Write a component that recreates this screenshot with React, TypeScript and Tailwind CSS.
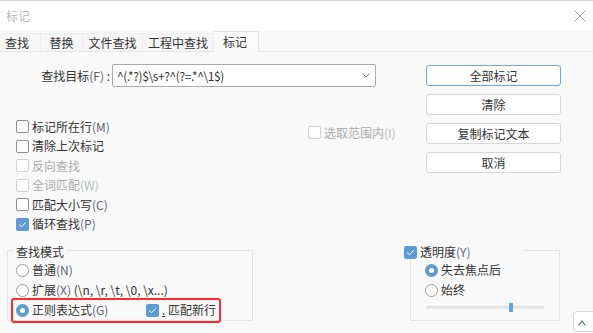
import React from "react";

const FONT = "font-['Noto_Sans_CJK_SC','Microsoft_YaHei',sans-serif]";

function CheckBox({ checked, disabled }: { checked?: boolean; disabled?: boolean }) {
  if (checked) {
    return (
      <span className="w-[13px] h-[13px] rounded-[2px] bg-[#5b9bd6] flex items-center justify-center shrink-0">
        <svg width="9" height="7" viewBox="0 0 9 7">
          <path d="M1.2 3.6 L3.6 5.8 L7.8 1.2" stroke="#ffffff" strokeWidth="1" fill="none" />
        </svg>
      </span>
    );
  }
  return (
    <span
      className={`w-[13px] h-[13px] rounded-[2px] border bg-white shrink-0 ${
        disabled ? "border-[#d2d2d2]" : "border-[#8e8e8e]"
      }`}
    />
  );
}

function Radio({ checked }: { checked?: boolean }) {
  if (checked) {
    return (
      <span className="w-[13px] h-[13px] rounded-full bg-[#5b9bd6] flex items-center justify-center shrink-0">
        <span className="w-[5px] h-[5px] rounded-full bg-white" />
      </span>
    );
  }
  return <span className="w-[13px] h-[13px] rounded-full border border-[#9a9a9a] bg-white shrink-0" />;
}

function CheckRow({
  label,
  mn,
  checked,
  disabled,
}: {
  label: string;
  mn?: string;
  checked?: boolean;
  disabled?: boolean;
}) {
  return (
    <div className="h-[19.5px] flex items-center gap-[3px]">
      <CheckBox checked={checked} disabled={disabled} />
      <span className={`leading-[16px] whitespace-nowrap ${disabled ? "text-[#ababab]" : "text-[#333333]"}`}>
        {label}
        {mn && <span className={disabled ? "text-[#b4b8c0]" : "text-[#5d6470]"}>({mn})</span>}
      </span>
    </div>
  );
}

function Btn({ children, primary }: { children: React.ReactNode; primary?: boolean }) {
  return (
    <div
      className={`h-[21px] w-[135px] rounded-[3px] border bg-white flex items-center justify-center leading-[16px] text-[#333333] ${
        primary ? "border-[#6aa9e0]" : "border-[#d8d8d8]"
      }`}
    >
      {children}
    </div>
  );
}

export default function App() {
  const tabs = [
    { t: "查找", w: "w-[41px]", extra: "justify-start pl-[5px]" },
    { t: "替换", w: "w-[42px]", extra: "justify-center" },
    { t: "文件查找", w: "w-[60px]", extra: "justify-center" },
    { t: "工程中查找", w: "w-[71px]", extra: "justify-center" },
  ];
  return (
    <div
      className={`${FONT} text-[12px] w-[593px] h-[333px] bg-[#f9f9f9] relative overflow-hidden border-t border-[#d6d6d6]`}
    >
      {/* title bar */}
      <div className="h-[30px] bg-white flex items-center justify-between pl-[6px] pr-[7px]">
        <span className="text-[#b8b8b8] leading-[16px]">标记</span>
        <svg width="12" height="12" viewBox="0 0 12 12">
          <path d="M0.5 0.5 L11.5 11.5 M11.5 0.5 L0.5 11.5" stroke="#9c9c9c" strokeWidth="1" />
        </svg>
      </div>

      {/* tab bar */}
      <div className="h-[21px] flex items-end border-b border-[#e4e4e4] bg-[#f9f9f9]">
        {tabs.map((tb) => (
          <div
            key={tb.t}
            className={`${tb.w} ${tb.extra} h-[18px] flex items-center border-t border-r border-[#ececec] bg-[#f6f6f6] text-[#333333] leading-[16px]`}
          >
            {tb.t}
          </div>
        ))}
        <div className="w-[45px] h-[21px] -mb-[1px] flex items-center pl-[9px] border-t border-r border-[#e2e2e2] bg-[#fafafa] text-[#333333] leading-[16px] pb-[1px]">
          标记
        </div>
      </div>

      {/* top section */}
      <div className="flex">
        <div className="w-[426px]">
          <div className="mt-[12px] h-[23px] flex items-center">
            <span className="w-[112px] pr-[2px] text-right text-[#333333] leading-[16px] whitespace-nowrap">
              查找目标<span className="text-[#5d6470]">(F)</span> :
            </span>
            <div className="w-[264px] h-[23px] border border-[#a9a9a9] rounded-[2px] bg-white flex items-center justify-between pl-[4px] pr-[5px]">
              <span className="text-[#333333] leading-[16px] whitespace-nowrap tracking-[-0.4px]">
                ^(.*?)$\s+?^(?=.*^\1$)
              </span>
              <svg width="8" height="5" viewBox="0 0 8 5">
                <path d="M0.5 0.5 L4 4 L7.5 0.5" stroke="#8a8a8a" strokeWidth="1" fill="none" />
              </svg>
            </div>
          </div>

          <div className="flex mt-[30px]">
            <div className="ml-[16px] w-[292px] flex flex-col">
              <CheckRow label="标记所在行" mn="M" />
              <CheckRow label="清除上次标记" />
              <CheckRow label="反向查找" disabled />
              <CheckRow label="全词匹配" mn="W" disabled />
              <CheckRow label="匹配大小写" mn="C" />
              <CheckRow label="循环查找" mn="P" checked />
            </div>
            <div className="mt-[6px]">
              <CheckRow label="选取范围内" mn="I" disabled />
            </div>
          </div>
        </div>

        <div className="mt-[13px] flex flex-col gap-[8px]">
          <Btn primary>全部标记</Btn>
          <Btn>清除</Btn>
          <Btn>复制标记文本</Btn>
          <Btn>取消</Btn>
        </div>
      </div>

      {/* bottom groups */}
      <div className="flex items-start mt-[16px]">
        <div className="relative ml-[7px] w-[246px] h-[71px] border border-[#e3e3e3] pt-[9px] pl-[8px]">
          <span className="absolute left-[6px] -top-[7px] px-[2px] bg-[#f9f9f9] leading-[16px] text-[#333333]">
            查找模式
          </span>
          <div className="h-[20px] flex items-center gap-[3px]">
            <Radio />
            <span className="leading-[16px] text-[#333333]">
              普通<span className="text-[#5d6470]">(N)</span>
            </span>
          </div>
          <div className="h-[20px] flex items-center gap-[3px]">
            <Radio />
            <span className="leading-[16px] text-[#333333] whitespace-nowrap">
              扩展<span className="text-[#5d6470]">(X)</span> (\n, \r, \t, \0, \x...)
            </span>
          </div>
          <div className="h-[20px] flex items-center">
            <div className="w-[130px] flex items-center gap-[3px]">
              <Radio checked />
              <span className="leading-[16px] text-[#333333]">
                正则表达式<span className="text-[#5d6470]">(G)</span>
              </span>
            </div>
            <div className="flex items-center gap-[3px]">
              <CheckBox checked />
              <span className="leading-[16px] text-[#333333] whitespace-nowrap">
                <span className="underline">.</span> 匹配新行
              </span>
            </div>
          </div>
        </div>

        <div className="relative ml-[157px] w-[150px] h-[71px] border border-[#e3e3e3] pt-[9px] pl-[14px]">
          <div className="absolute -left-[7px] -top-[7px] w-[119px] h-[16px] bg-[#f9f9f9] flex items-center gap-[3px]">
            <CheckBox checked />
            <span className="leading-[16px] text-[#333333]">
              透明度<span className="text-[#5d6470]">(Y)</span>
            </span>
          </div>
          <div className="h-[20px] flex items-center gap-[3px]">
            <Radio checked />
            <span className="leading-[16px] text-[#333333]">失去焦点后</span>
          </div>
          <div className="h-[20px] flex items-center gap-[3px]">
            <Radio />
            <span className="leading-[16px] text-[#333333]">始终</span>
          </div>
          <div className="relative mt-[6px] ml-[1px] w-[118px] h-[3px] bg-[#e7e7e7] border-t border-[#dcdcdc]">
            <span className="absolute left-[83px] -top-[4px] w-[4px] h-[9px] bg-[#5aa5e6]" />
          </div>
        </div>
      </div>

      {/* red annotation box */}
      <div className="absolute left-[11px] top-[297px] w-[210px] h-[25px] border-2 border-[#ff2a2a] rounded-[3px]" />

      {/* small floating button */}
      <div className="absolute left-[573px] top-[310px] w-[26px] h-[21px] rounded-[4px] border border-[#d6d6d6] bg-white flex items-center pl-[4px] pt-[3px]">
        <svg width="8" height="6" viewBox="0 0 8 6">
          <path d="M0.5 5.5 L4 1 L7.5 5.5" stroke="#4d6f9c" strokeWidth="1.1" fill="none" />
        </svg>
      </div>
    </div>
  );
}
